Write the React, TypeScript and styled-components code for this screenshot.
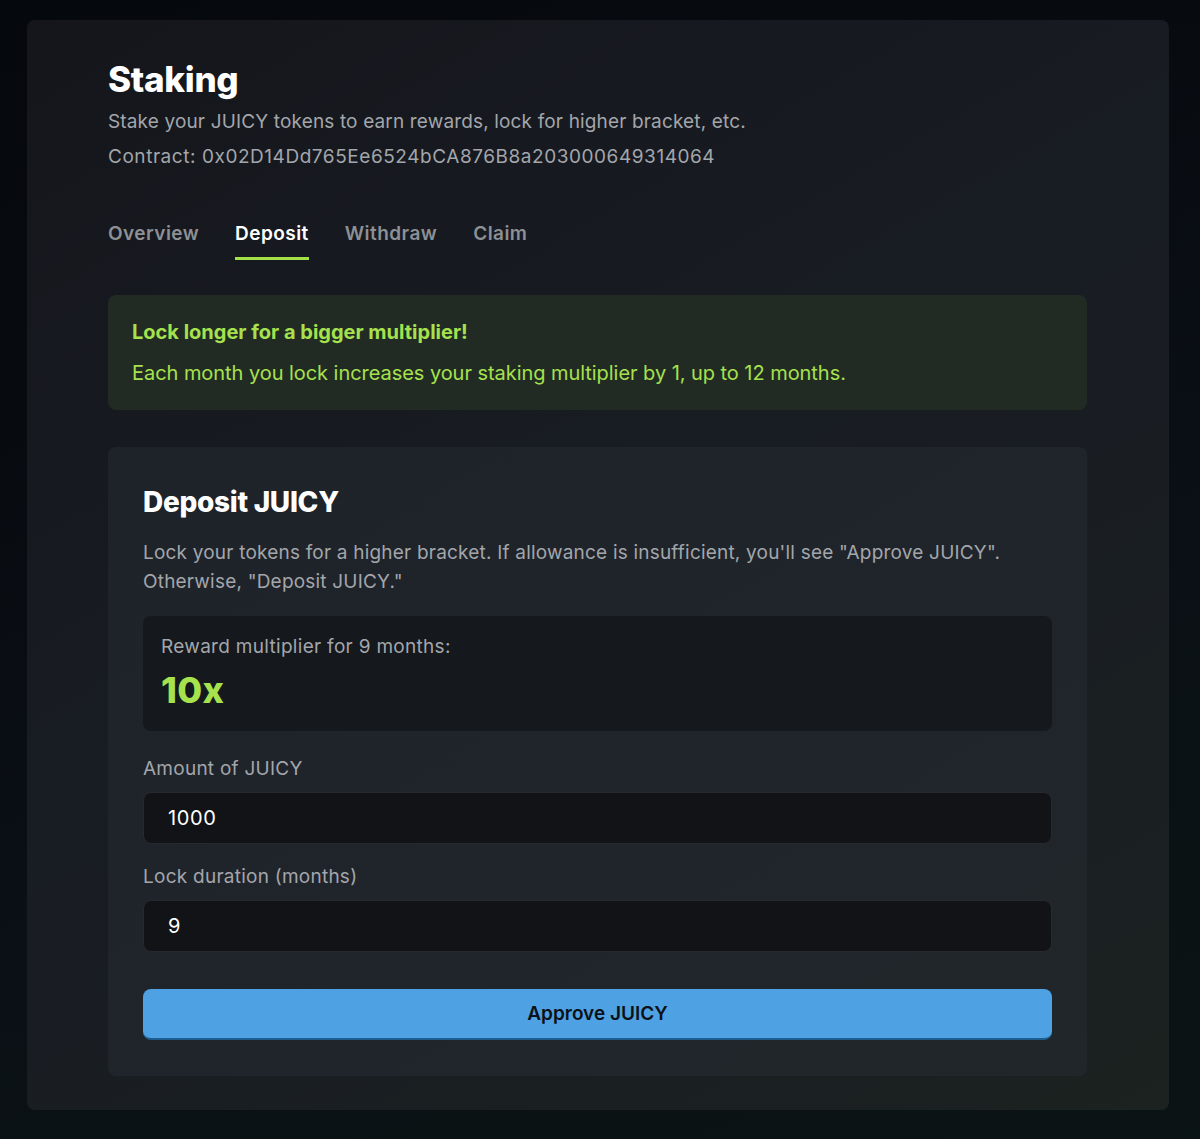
import * as React from 'react';
import styled, { createGlobalStyle } from 'styled-components';

const GlobalStyle = createGlobalStyle`
    html, body {
        margin: 0;
        padding: 0;
        background: #070b10;
    }

    body {
        font-family: Inter, 'Noto Sans', sans-serif;
        color: #ffffff;
    }
`;

const Page = styled.div`
    min-height: 1139px;
    box-sizing: border-box;
    padding: 20px 31px 29px 27px;
    background: linear-gradient(160deg, #05080c 0%, #0a0f15 55%, #0b1414 100%);
`;

const Card = styled.div`
    box-sizing: border-box;
    padding: 39px 82px 34px 81px;
    border-radius: 8px;
    background: linear-gradient(150deg, #14161b 0%, #181c23 45%, #1a1f22 80%, #1b221f 100%);
`;

const Title = styled.h1`
    margin: 0 0 8px;
    font-size: 35px;
    line-height: 41px;
    font-weight: 800;
    letter-spacing: -0.3px;
`;

const Muted = styled.p<{ $gap?: number; $spacing?: number }>`
    margin: 0 0 ${(p) => p.$gap ?? 0}px;
    font-size: 19px;
    line-height: 28px;
    letter-spacing: ${(p) => p.$spacing ?? 0.15}px;
    color: #a3a6ab;
`;

const Tabs = styled.nav`
    display: flex;
    gap: 36px;
    margin: 51px 0 35px;
`;

const Tab = styled.button<{ $active?: boolean }>`
    padding: 0 0 11px;
    border: 0;
    border-bottom: 3px solid ${(p) => (p.$active ? '#a3e048' : 'transparent')};
    background: none;
    font-family: inherit;
    font-size: 19px;
    line-height: 24px;
    font-weight: 600;
    letter-spacing: 0.45px;
    color: ${(p) => (p.$active ? '#ffffff' : '#8d9095')};
    cursor: pointer;
`;

const Notice = styled.div`
    padding: 23px 24px;
    border-radius: 8px;
    background: #212b23;
    color: #a6e14e;
`;

const NoticeTitle = styled.div`
    margin-bottom: 13px;
    font-size: 20px;
    line-height: 28px;
    font-weight: 700;
`;

const NoticeText = styled.div`
    font-size: 20px;
    line-height: 28px;
    letter-spacing: -0.05px;
`;

const Panel = styled.section`
    margin-top: 37px;
    padding: 37px 35px 36px;
    border-radius: 8px;
    background: linear-gradient(150deg, #1e2229 0%, #20252c 60%, #21262a 100%);
`;

const PanelTitle = styled.h2`
    margin: 0 0 18px;
    font-size: 28px;
    line-height: 36px;
    font-weight: 800;
    letter-spacing: -0.3px;
`;

const PanelText = styled.p`
    margin: 0 0 20px;
    font-size: 19px;
    line-height: 29px;
    letter-spacing: 0.2px;
    color: #a3a6ab;
`;

const Multiplier = styled.div`
    padding: 17px 18px 20px;
    border-radius: 8px;
    background: #15181d;
`;

const MultiplierLabel = styled.div`
    font-size: 19px;
    line-height: 28px;
    letter-spacing: 0.3px;
    color: #a3a6ab;
`;

const MultiplierValue = styled.div`
    margin-top: 8px;
    font-size: 36px;
    line-height: 42px;
    font-weight: 800;
    letter-spacing: 0.3px;
    color: #a6e14e;
`;

const Field = styled.label`
    display: flex;
    flex-direction: column;
    gap: 9px;
    margin-top: 24px;

    & + & {
        margin-top: 19px;
    }
`;

const FieldLabel = styled.span`
    font-size: 19px;
    line-height: 28px;
    letter-spacing: 0.25px;
    color: #a3a6ab;
`;

const Input = styled.input`
    box-sizing: border-box;
    height: 52px;
    padding: 0 24px;
    border: 1px solid #272b31;
    border-radius: 8px;
    background: #111316;
    font-family: inherit;
    font-size: 20px;
    letter-spacing: 0.6px;
    color: #ffffff;
    outline: none;
`;

const Button = styled.button`
    width: 100%;
    height: 51px;
    margin-top: 37px;
    border: 0;
    border-bottom: 2px solid #1e5e8e;
    border-radius: 8px;
    background: #4ea2e3;
    font-family: inherit;
    font-size: 19px;
    font-weight: 600;
    color: #0d1117;
    cursor: pointer;
`;

const tabs = ['Overview', 'Deposit', 'Withdraw', 'Claim'];

const App: React.FC = () => {
    const [active, setActive] = React.useState('Deposit');
    const [amount, setAmount] = React.useState('1000');
    const [months, setMonths] = React.useState('9');

    return (
        <>
            <GlobalStyle />
            <Page>
                <Card>
                    <Title>Staking</Title>
                    <Muted $gap={7}>
                        Stake your JUICY tokens to earn rewards, lock for higher bracket, etc.
                    </Muted>
                    <Muted $spacing={0.55}>Contract: 0x02D14Dd765Ee6524bCA876B8a203000649314064</Muted>

                    <Tabs>
                        {tabs.map((t) => (
                            <Tab key={t} $active={t === active} onClick={() => setActive(t)}>
                                {t}
                            </Tab>
                        ))}
                    </Tabs>

                    <Notice>
                        <NoticeTitle>Lock longer for a bigger multiplier!</NoticeTitle>
                        <NoticeText>
                            Each month you lock increases your staking multiplier by 1, up to 12 months.
                        </NoticeText>
                    </Notice>

                    <Panel>
                        <PanelTitle>Deposit JUICY</PanelTitle>
                        <PanelText>
                            Lock your tokens for a higher bracket. If allowance is insufficient, you'll see
                            "Approve JUICY". Otherwise, "Deposit JUICY."
                        </PanelText>
                        <Multiplier>
                            <MultiplierLabel>Reward multiplier for {months || 0} months:</MultiplierLabel>
                            <MultiplierValue>{(Number(months) || 0) + 1}x</MultiplierValue>
                        </Multiplier>
                        <Field>
                            <FieldLabel>Amount of JUICY</FieldLabel>
                            <Input value={amount} onChange={(e) => setAmount(e.target.value)} />
                        </Field>
                        <Field>
                            <FieldLabel>Lock duration (months)</FieldLabel>
                            <Input value={months} onChange={(e) => setMonths(e.target.value)} />
                        </Field>
                        <Button>Approve JUICY</Button>
                    </Panel>
                </Card>
            </Page>
        </>
    );
};

export default App;
